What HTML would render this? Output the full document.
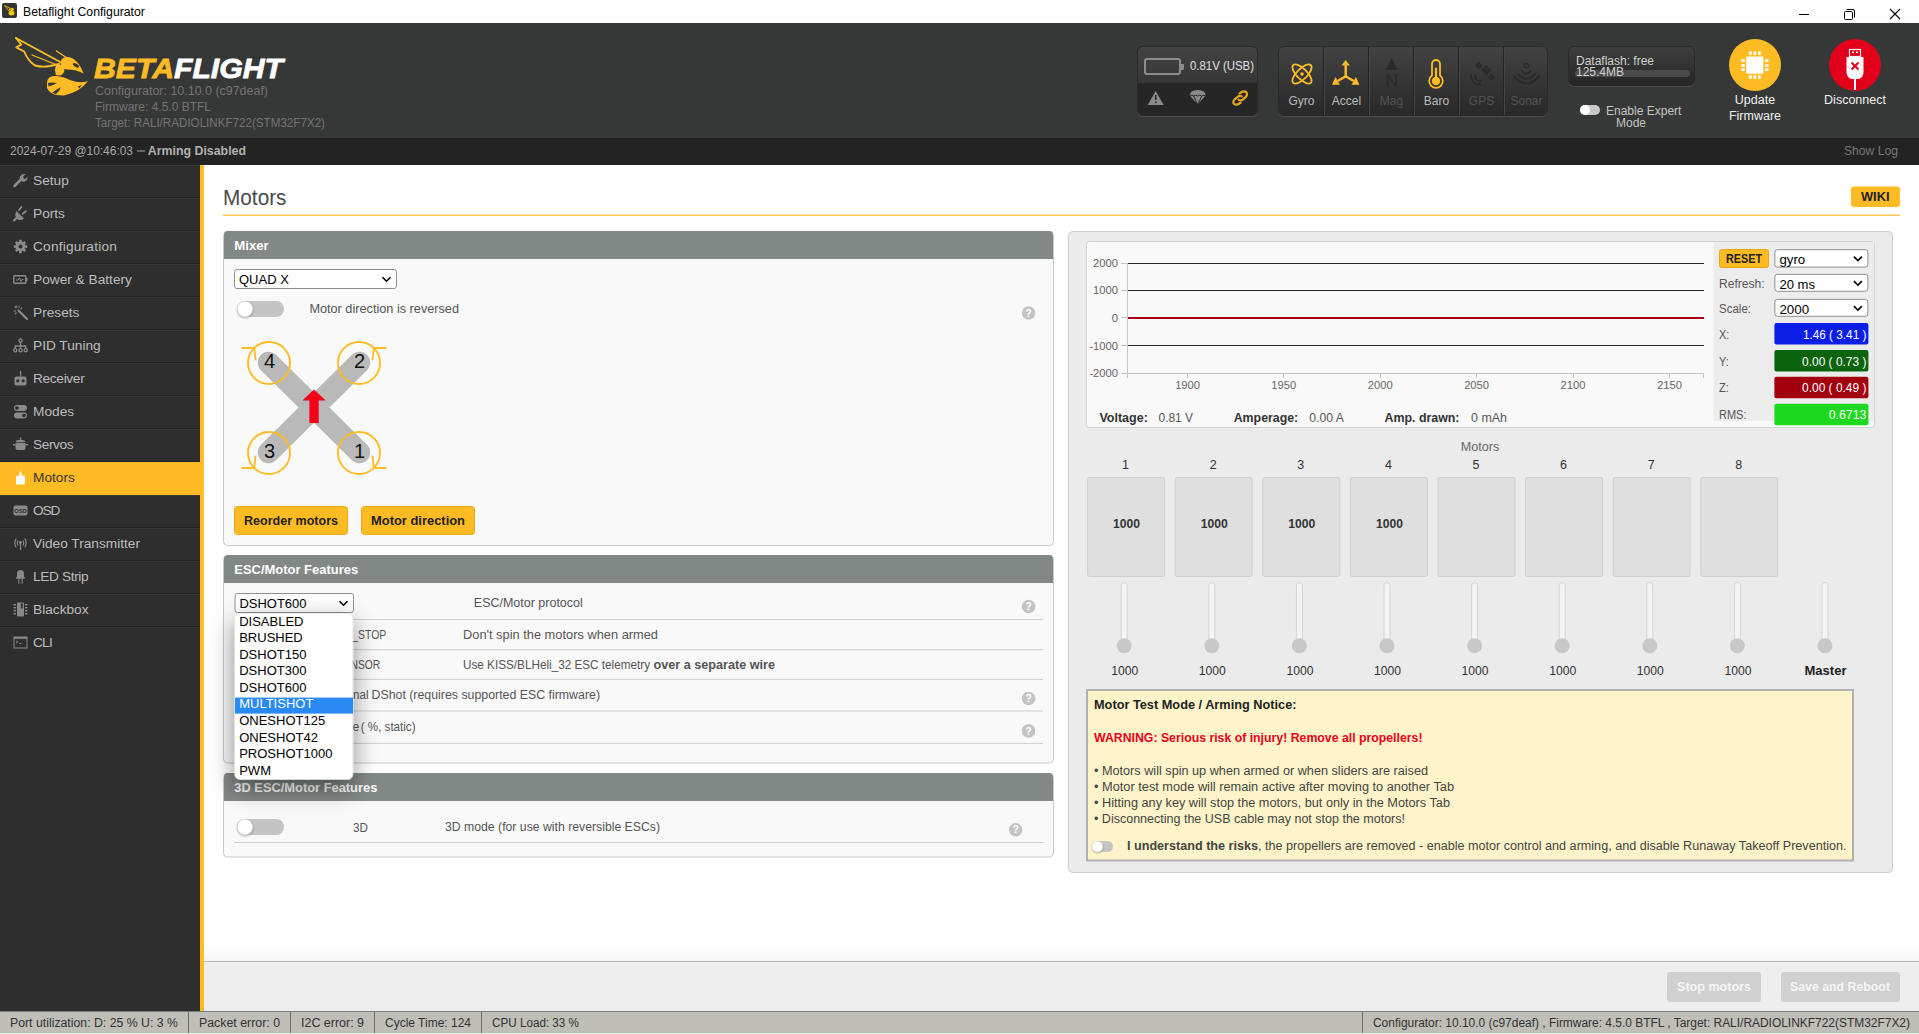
<!DOCTYPE html>
<html><head><meta charset="utf-8">
<style>
*{box-sizing:border-box;margin:0;padding:0}
html,body{width:1919px;height:1034px;overflow:hidden;background:#fff;font-family:"Liberation Sans",sans-serif;position:relative}
.abs{position:absolute}
svg{position:absolute;overflow:visible}
.t{position:absolute;white-space:nowrap;line-height:1}
#titlebar{left:0;top:0;width:1919px;height:23px;background:#fff}
#header{left:0;top:23px;width:1919px;height:115px;background:#363837}
#status{left:0;top:138px;width:1919px;height:27px;background:#232323}
#sidebar{left:0;top:165px;width:200px;height:846px;background:#2e2e2e}
#ybar{left:200px;top:165px;width:4px;height:846px;background:#ffbb24}
#content{left:204px;top:165px;width:1715px;height:796px;background:#fff}
#toolbar{left:204px;top:961px;width:1715px;height:50px;background:#eeeeee;border-top:1px solid #b9b9b9}
#footer{left:0;top:1011px;width:1919px;height:23px;background:#bfbeb7;border-top:1px solid #7d7d7d}
.nav{position:absolute;left:0;width:200px;height:33px;border-top:1px solid #383838;border-bottom:1px solid #232323}
.nav .lbl{position:absolute;left:33px;top:6.5px;font-size:13.7px;color:#bdbdbd;white-space:nowrap;line-height:16px}
.nav svg{left:13px;top:7px}
.nav.on{background:#ffbb24;border-color:#ffbb24}
.nav.on .lbl{color:#333}
.hbox{position:absolute;border-radius:6px;border:1px solid #2a2a2a;box-shadow:0 1px 0 #4a4a4a}
.scell{position:absolute;top:0;width:45px;height:69px;border-left:1px solid #242424;box-shadow:inset 1px 0 0 #454545}
.scell .lbl{position:absolute;left:0;width:45px;top:47px;text-align:center;font-size:12px;line-height:14px}
.fitem{position:absolute;top:0;height:22px;font-size:12px;line-height:22px;color:#333;padding:0 10px;border-left:1px solid #8a8a85}
</style></head>
<body>
<!-- TITLE BAR -->
<div id="titlebar" class="abs">
  <div class="abs" style="left:2px;top:3px;width:15px;height:15px;background:#333;border-radius:2px"></div>
  <svg width="15" height="15" style="left:2px;top:3px"><path d="M2.5 2.5 L8 5 L7 8 Z" fill="none" stroke="#d4b000" stroke-width="1"/><ellipse cx="9.5" cy="10" rx="3" ry="2.5" fill="#f0c800"/><circle cx="10" cy="6.5" r="1.8" fill="#f0c800"/></svg>
  <div class="t" style="left:23px;top:6px;font-size:12.25px;color:#000">Betaflight Configurator</div>
  <div class="abs" style="left:1799px;top:14px;width:10px;height:1px;background:#000"></div>
  <svg width="14" height="14" style="left:1843px;top:8px"><rect x="1.5" y="3.5" width="8" height="8" rx="1.2" fill="none" stroke="#000" stroke-width="1"/><path d="M3.5 1.5 H10 Q11.5 1.5 11.5 3 V9.5" fill="none" stroke="#000" stroke-width="1"/></svg>
  <svg width="14" height="14" style="left:1889px;top:8px"><path d="M1 1 L11 11 M11 1 L1 11" stroke="#000" stroke-width="1.1"/></svg>
</div>
<!-- HEADER -->
<div id="header" class="abs">
  <svg width="300" height="115" style="left:0;top:0" viewBox="0 23 300 115">
    <g fill="#ffbb24">
      <path d="M47,83 Q47,76 55,76 Q62,76 70,80 Q80,84 88,81 Q80,92 64,95.5 Q50,96 47,88 Z"/>
      <circle cx="58.8" cy="70" r="5.6"/>
      <path d="M60.5,62 Q62,56.5 68,57 Q78,58.5 83.5,73.5 Q76,69.5 68,69.5 Q60.5,70 60.5,62 Z"/>
    </g>
    <g fill="#363837">
      <ellipse cx="76" cy="65.3" rx="3.4" ry="1.6" transform="rotate(32 76 65.3)"/>
      <path d="M48,83 Q52,82 57,83 Q52,86 48.5,86.5 Z"/>
      <path d="M52,93 Q57,89 61,87 Q59,92 56,94 Z"/>
      <path d="M78,86.5 L82,85 L79,88.5 Z"/>
      <path d="M53,66 Q51,70 54,75 L56,74 Q54,70 56,66 Z"/>
    </g>
    <g fill="none" stroke="#ffbb24" stroke-linecap="round" stroke-linejoin="round">
      <path d="M16,38 L62,63" stroke-width="1.9"/>
      <path d="M16,38 L21.3,44.6 L16.3,47.3 L24.2,51.5 Q28,61 35,65.5 Q42,67.5 50,66 L59,64" stroke-width="1.9"/>
      <path d="M32,55 L57,65" stroke-width="1.2"/>
      <path d="M56.5,51 L67,58" stroke-width="1.4"/>
    </g>
    <text x="94" y="78.3" font-family="Liberation Sans" font-weight="bold" font-style="italic" font-size="28" textLength="189" lengthAdjust="spacingAndGlyphs"><tspan fill="#ffbb24" stroke="#ffbb24" stroke-width="0.8">BETA</tspan><tspan fill="#ffffff" stroke="#ffffff" stroke-width="0.8">FLIGHT</tspan></text>
    <g font-family="Liberation Sans" font-size="12" fill="#737373">
      <text x="95" y="95" textLength="173" lengthAdjust="spacingAndGlyphs">Configurator: 10.10.0 (c97deaf)</text>
      <text x="95" y="110.8" textLength="116" lengthAdjust="spacingAndGlyphs">Firmware: 4.5.0 BTFL</text>
      <text x="95" y="126.5" textLength="230" lengthAdjust="spacingAndGlyphs">Target: RALI/RADIOLINKF722(STM32F7X2)</text>
    </g>
  </svg>
  <!-- battery box -->
  <div class="hbox" style="left:1137px;top:23px;width:121px;height:70px;overflow:hidden;background:#262626">
    <div class="abs" style="left:0;top:0;width:121px;height:36px;background:linear-gradient(#434343,#363636)"></div>
    <div class="abs" style="left:6px;top:11px;width:37px;height:17px;border:2px solid #8c8c8c;border-radius:3px"></div>
    <div class="abs" style="left:43px;top:17px;width:3px;height:6px;background:#8c8c8c;border-radius:0 1px 1px 0"></div>
    <svg width="121" height="70" style="left:0;top:0" viewBox="1137 46 121 70">
      <text x="1189" y="69.3" font-family="Liberation Sans" font-size="12.5" fill="#e0e0e0" textLength="64" lengthAdjust="spacingAndGlyphs">0.81V (USB)</text>
      <g transform="translate(-0.3,-1)"><path d="M1155,91 L1163,105 L1147,105 Z" fill="#8a8a8a"/>
      <rect x="1154.3" y="95" width="1.5" height="5" fill="#262626"/><rect x="1154.3" y="101.5" width="1.5" height="1.6" fill="#262626"/>
      <path d="M1189,96 Q1189,90 1197,90 Q1205,90 1205,96 L1197,105 Z" fill="#8a8a8a"/>
      <path d="M1189,96 L1197,105 L1205,96 M1193,96 L1197,105 L1201,96 M1189,96 Q1191,94.5 1193,96 Q1195,94.5 1197,96 Q1199,94.5 1201,96 Q1203,94.5 1205,96" fill="none" stroke="#262626" stroke-width="1"/>
      </g><g fill="none" stroke="#e6a823" stroke-width="2.2" stroke-linecap="round" transform="translate(-1,-1)"><path d="M1239.5,93.5 Q1243,90.3 1245.8,91.8 Q1248.3,94.2 1245.6,97.2 L1242.8,99.6 Q1240.6,101.2 1238.6,99.6"/><path d="M1241.8,96.4 Q1239.6,95.2 1237.4,97 L1234.5,99.6 Q1232,102.5 1234.4,104.2 Q1237.5,105.3 1240.6,102.6"/></g>
    </svg>
  </div>
  <!-- sensors box -->
  <div class="hbox" style="left:1278px;top:23px;width:270px;height:70px;overflow:hidden;background:linear-gradient(#424242,#292929)">
    <div class="scell" style="left:0;border-left:none;box-shadow:none"><div class="lbl" style="color:#bababa">Gyro</div></div>
    <div class="scell" style="left:44px"><div class="lbl" style="color:#bababa">Accel</div></div>
    <div class="scell" style="left:89px"><div class="lbl" style="color:#525252">Mag</div></div>
    <div class="scell" style="left:134px"><div class="lbl" style="color:#bababa">Baro</div></div>
    <div class="scell" style="left:179px"><div class="lbl" style="color:#525252">GPS</div></div>
    <div class="scell" style="left:224px"><div class="lbl" style="color:#525252">Sonar</div></div>
    <svg width="270" height="70" style="left:0;top:0" viewBox="1278 46 270 70">
      <g fill="none" stroke="#ffbb24" stroke-width="1.8">
        <ellipse cx="1301" cy="73" rx="12.5" ry="5.2" transform="rotate(45 1301 73)"/>
        <ellipse cx="1301" cy="73" rx="12.5" ry="5.2" transform="rotate(-45 1301 73)"/>
      </g>
      <circle cx="1301" cy="73" r="1.8" fill="#ffbb24"/>
      <g fill="#ffbb24">
        <rect x="1343.5" y="63" width="2.4" height="12"/>
        <path d="M1344.7,59 L1348.8,64.5 L1340.6,64.5 Z"/>
        <path d="M1344.7,74 L1336,79 L1337.3,81 L1345.9,76 Z"/>
        <path d="M1344.7,74 L1353.4,79 L1352.1,81 L1343.5,76 Z"/>
        <path d="M1331,83.8 L1334.5,76 L1338.8,83.8 Z"/>
        <path d="M1358.4,83.8 L1354.9,76 L1350.6,83.8 Z"/>
        <circle cx="1435" cy="80" r="4.2"/><rect x="1433.9" y="66.7" width="2.2" height="13"/>
      </g>
      <path d="M1431,74.5 V63 A4,4 0 0 1 1439,63 V74.5 A6.8,6.8 0 1 1 1431,74.5 Z" fill="none" stroke="#ffbb24" stroke-width="1.8"/>
      <g fill="#2c2c2c">
        <path d="M1390.5,57 L1396.5,69 L1384.5,69 Z"/>
        <path d="M1385.5,86 L1385.5,73 L1387.5,73 L1394,82.5 L1394,73 L1396,73 L1396,86 L1394,86 L1387.5,76.5 L1387.5,86 Z"/>
        <path d="M1477.7,60.5 L1481.7,64.5 L1477.7,68.5 L1473.7,64.5 Z"/>
        <path d="M1485.2,64 L1490.4,69.2 L1485.2,74.4 L1480,69.2 Z"/>
        <path d="M1490.6,72 L1494.6,76 L1490.6,80 L1486.6,76 Z"/>
      </g>
      <g fill="none" stroke="#2a2a2a" stroke-width="1.8">
        <path d="M1470,73.5 Q1469.5,83.5 1481,84"/><path d="M1473.8,73.8 Q1473.5,80.5 1481,80.5"/>
        <path d="M1512.5,75 Q1525.5,90 1538.5,75" stroke-width="2.2"/><path d="M1516.5,72.5 Q1525.5,83.5 1534.5,72.5" stroke-width="2"/><path d="M1520.5,69.5 Q1525.5,76 1530.5,69.5" stroke-width="1.8"/>
      </g>
      <circle cx="1525.5" cy="64.7" r="2.1" fill="none" stroke="#2a2a2a" stroke-width="1.5"/>
    </svg>
  </div>
  <!-- dataflash -->
  <div class="hbox" style="left:1568px;top:23px;width:127px;height:40px;background:linear-gradient(#3e3e3e,#262626)">
    <div class="abs" style="left:6px;top:23px;width:115px;height:7px;border-radius:4px;background:#4a4a4a"></div>
    <div class="t" style="left:7px;top:8.5px;font-size:12px;color:#d0d0d0;line-height:11.3px">Dataflash: free<br>125.4MB</div>
  </div>
  <!-- expert toggle -->
  <div class="abs" style="left:1580px;top:82px;width:20px;height:10px;border-radius:5px;background:#c8c8c8"></div>
  <div class="abs" style="left:1580px;top:82px;width:10px;height:10px;border-radius:5px;background:#fff"></div>
  <div class="t" style="left:1606px;top:83px;font-size:12px;color:#c4c4c4;line-height:11.3px">Enable Expert</div><div class="t" style="left:1616px;top:95.3px;font-size:12px;color:#c4c4c4;line-height:11.3px">Mode</div>
  <!-- update firmware -->
  <div class="abs" style="left:1729px;top:15.5px;width:52px;height:52px;border-radius:50%;background:#ffbb24"></div>
  <svg width="52" height="52" style="left:1729px;top:15px" viewBox="1729 38 52 52">
    <g fill="#fff"><rect x="1746.2" y="56.6" width="17.2" height="17.2" rx="1.2"/><rect x="1748.9" y="51.6" width="2.9" height="3.5" rx="0.8"/><rect x="1748.9" y="75.2" width="2.9" height="3.5" rx="0.8"/><rect x="1753.4" y="51.6" width="2.9" height="3.5" rx="0.8"/><rect x="1753.4" y="75.2" width="2.9" height="3.5" rx="0.8"/><rect x="1758.0" y="51.6" width="2.9" height="3.5" rx="0.8"/><rect x="1758.0" y="75.2" width="2.9" height="3.5" rx="0.8"/><rect x="1741.2" y="59.3" width="3.7" height="2.7" rx="0.8"/><rect x="1765" y="59.3" width="3.6" height="2.7" rx="0.8"/><rect x="1741.2" y="64.0" width="3.7" height="2.7" rx="0.8"/><rect x="1765" y="64.0" width="3.6" height="2.7" rx="0.8"/><rect x="1741.2" y="68.2" width="3.7" height="2.7" rx="0.8"/><rect x="1765" y="68.2" width="3.6" height="2.7" rx="0.8"/></g>
  </svg>
  <div class="t" style="left:1715px;top:68.5px;width:80px;text-align:center;font-size:12.5px;line-height:16px;color:#f0f0f0">Update<br>Firmware</div>
  <!-- disconnect -->
  <div class="abs" style="left:1829px;top:15.5px;width:52px;height:52px;border-radius:50%;background:#e2001a"></div>
  <svg width="52" height="52" style="left:1829px;top:15px" viewBox="1829 38 52 52">
    <rect x="1849.5" y="49.5" width="11" height="7" fill="none" stroke="#fff" stroke-width="1.2"/>
    <rect x="1852" y="51.5" width="2" height="1.5" fill="#fff"/><rect x="1856" y="51.5" width="2" height="1.5" fill="#fff"/>
    <path d="M1846.5,57 L1863.5,57 L1863.5,72 Q1863.5,77 1859,79 L1851,79 Q1846.5,77 1846.5,72 Z" fill="#fff"/>
    <rect x="1854" y="78" width="2" height="12" fill="#fff"/>
    <path d="M1851.5,62.5 L1858.5,69.5 M1858.5,62.5 L1851.5,69.5" stroke="#e2001a" stroke-width="2"/>
  </svg>
  <div class="t" style="left:1815px;top:69px;width:80px;text-align:center;font-size:12.5px;line-height:16px;color:#f0f0f0">Disconnect</div>
</div>
<!-- STATUS -->
<div id="status" class="abs">
  <svg width="1919" height="27" style="left:0;top:0" viewBox="0 138 1919 27">
    <g font-family="Liberation Sans" font-size="12.2">
      <text x="10" y="154.6" fill="#a8a8a8" textLength="123" lengthAdjust="spacingAndGlyphs">2024-07-29 @10:46:03</text>
      <rect x="137" y="150.5" width="8" height="1" fill="#a8a8a8"/>
      <text x="147.8" y="154.6" fill="#b0b0b0" font-weight="bold" textLength="98.2" lengthAdjust="spacingAndGlyphs">Arming Disabled</text>
      <text x="1844" y="154.6" fill="#777" textLength="54" lengthAdjust="spacingAndGlyphs">Show Log</text>
    </g>
  </svg>
</div>
<!-- SIDEBAR -->
<div id="sidebar" class="abs">
  <div class="nav" style="top:0px"><svg width="15" height="15"><path d="M1.5,13 L8,6.5" stroke="#8a8a8a" stroke-width="2.6" stroke-linecap="round"/><path d="M7,7 Q6,3 9,1.5 Q11,0.8 12.5,1.3 L10,3.8 L10.8,5.5 L12.5,6 L14.5,3.8 Q14.8,6 13.5,7.5 Q11,9.5 8,8" fill="#8a8a8a"/></svg><div class="lbl">Setup</div></div>
  <div class="nav" style="top:33px"><svg width="15" height="15"><path d="M3.5,5 L11,12.5 Q8,15 5,13.5 Q2.5,12 2.3,9 Q2.3,7 3.5,5 Z" fill="#8a8a8a"/><path d="M3.5,12 L1,14.5" stroke="#8a8a8a" stroke-width="2.2" stroke-linecap="round"/><path d="M6,4 L8.5,1 M9.8,7.8 L12.8,5.2" stroke="#8a8a8a" stroke-width="1.8" stroke-linecap="round"/></svg><div class="lbl">Ports</div></div>
  <div class="nav" style="top:66px"><svg width="15" height="15"><circle cx="7.5" cy="7.5" r="5" fill="#8a8a8a"/><g stroke="#8a8a8a" stroke-width="2.6"><path d="M7.5,0.8 V14.2 M0.8,7.5 H14.2 M2.8,2.8 L12.2,12.2 M12.2,2.8 L2.8,12.2"/></g><circle cx="7.5" cy="7.5" r="2" fill="#2e2e2e"/></svg><div class="lbl" style="letter-spacing:0.20px">Configuration</div></div>
  <div class="nav" style="top:99px"><svg width="15" height="15"><rect x="0.8" y="3.8" width="12" height="7.5" rx="0.8" fill="none" stroke="#8a8a8a" stroke-width="1.4"/><rect x="13" y="6" width="1.5" height="3" fill="#8a8a8a"/><path d="M3,8 L5,8 L6.5,5.8 L8,9.5 L9,7.5 L10.5,7.5" fill="none" stroke="#8a8a8a" stroke-width="1"/></svg><div class="lbl">Power &amp; Battery</div></div>
  <div class="nav" style="top:132px"><svg width="15" height="15"><path d="M5.5,5.5 L14,14" stroke="#8a8a8a" stroke-width="2.2" stroke-linecap="round"/><g stroke="#8a8a8a" stroke-width="1.1"><path d="M3,0.5 V3.5 M1.5,2 H4.5 M0.5,6 H3 M6,0.5 V2.5 M2,9 L3.5,7.5 M7.5,4 L9,2.5"/></g></svg><div class="lbl">Presets</div></div>
  <div class="nav" style="top:165px"><svg width="15" height="15"><g fill="none" stroke="#8a8a8a" stroke-width="1.3"><circle cx="7.5" cy="2.5" r="1.6"/><circle cx="2.3" cy="12.3" r="1.6"/><circle cx="7.5" cy="12.3" r="1.6"/><circle cx="12.7" cy="12.3" r="1.6"/><path d="M7.5,4 V10.7 M2.3,10.7 V8 H12.7 V10.7"/></g></svg><div class="lbl">PID Tuning</div></div>
  <div class="nav" style="top:198px"><svg width="15" height="15"><rect x="1.5" y="5.5" width="12" height="9" rx="2" fill="#8a8a8a"/><rect x="7" y="0" width="1.2" height="5.5" fill="#8a8a8a"/><circle cx="4.8" cy="9.8" r="1.6" fill="#2e2e2e"/><circle cx="10.2" cy="9.8" r="1.6" fill="#2e2e2e"/></svg><div class="lbl" style="letter-spacing:-0.33px">Receiver</div></div>
  <div class="nav" style="top:231px"><svg width="15" height="15"><rect x="1" y="1" width="13" height="6" rx="3" fill="#8a8a8a"/><rect x="1" y="8.5" width="13" height="6" rx="3" fill="#8a8a8a"/><circle cx="4" cy="4" r="1.8" fill="#2e2e2e"/><circle cx="11" cy="11.5" r="1.8" fill="#2e2e2e"/></svg><div class="lbl">Modes</div></div>
  <div class="nav" style="top:264px"><svg width="15" height="15"><path d="M2.5,6 H12.5 V11 Q12.5,13 10.5,13 H4.5 Q2.5,13 2.5,11 Z" fill="#8a8a8a"/><path d="M3,3.8 Q7.5,1.5 12,3.8 L12,5.2 H3 Z" fill="#8a8a8a"/><rect x="6.8" y="0.5" width="1.4" height="2" fill="#8a8a8a"/><rect x="0" y="7" width="2.5" height="1.5" fill="#8a8a8a"/><rect x="12.5" y="7" width="2.5" height="1.5" fill="#8a8a8a"/></svg><div class="lbl" style="letter-spacing:-0.42px">Servos</div></div>
  <div class="nav on" style="top:297px"><svg width="15" height="15"><path d="M3,7 Q3,5.5 4.5,5.5 H10.5 Q12,5.5 12,7 V13.5 Q12,14.5 11,14.5 H4 Q3,14.5 3,13.5 Z" fill="#fff"/><path d="M7.5,0 L9.2,5 H5.8 Z" fill="#fff"/></svg><div class="lbl">Motors</div></div>
  <div class="nav" style="top:330px"><svg width="15" height="15"><rect x="0.5" y="2.5" width="14" height="10" rx="2" fill="#8a8a8a"/><text x="7.5" y="10" font-size="5.8" font-family="Liberation Sans" font-weight="bold" text-anchor="middle" fill="#2e2e2e">OSD</text></svg><div class="lbl" style="letter-spacing:-1.20px">OSD</div></div>
  <div class="nav" style="top:363px"><svg width="15" height="15"><g fill="none" stroke="#8a8a8a" stroke-width="1.2"><path d="M3.2,2.5 Q0.5,7 3.2,11.5 M11.8,2.5 Q14.5,7 11.8,11.5 M5,4.5 Q3.5,7 5,9.5 M10,4.5 Q11.5,7 10,9.5"/></g><circle cx="7.5" cy="6.5" r="1.4" fill="#8a8a8a"/><rect x="6.9" y="7" width="1.2" height="7" fill="#8a8a8a"/></svg><div class="lbl">Video Transmitter</div></div>
  <div class="nav" style="top:396px"><svg width="15" height="15"><path d="M4,8 V4.5 Q4,1 7.5,1 Q11,1 11,4.5 V8 Z" fill="#8a8a8a"/><rect x="3.2" y="8" width="8.6" height="1.8" fill="#8a8a8a"/><rect x="5.3" y="9.8" width="1.1" height="5" fill="#8a8a8a"/><rect x="8.6" y="9.8" width="1.1" height="5" fill="#8a8a8a"/></svg><div class="lbl" style="letter-spacing:-0.37px">LED Strip</div></div>
  <div class="nav" style="top:429px"><svg width="15" height="15"><rect x="4" y="0.5" width="7" height="14" rx="1" fill="#8a8a8a"/><g fill="#8a8a8a"><rect x="0.5" y="2" width="2.5" height="1.4"/><rect x="0.5" y="5" width="2.5" height="1.4"/><rect x="0.5" y="8" width="2.5" height="1.4"/><rect x="0.5" y="11" width="2.5" height="1.4"/><rect x="12" y="2" width="2.5" height="1.4"/><rect x="12" y="5" width="2.5" height="1.4"/><rect x="12" y="8" width="2.5" height="1.4"/><rect x="12" y="11" width="2.5" height="1.4"/></g><rect x="7.8" y="1.5" width="2" height="5" fill="#2e2e2e"/></svg><div class="lbl">Blackbox</div></div>
  <div class="nav" style="top:462px;border-bottom:none"><svg width="15" height="15"><rect x="1" y="2" width="13" height="11" fill="none" stroke="#8a8a8a" stroke-width="1"/><rect x="1" y="2" width="13" height="1.8" fill="#8a8a8a"/><path d="M3,6 L5,7 L3,8 M6,8.5 H8.5" fill="none" stroke="#8a8a8a" stroke-width="0.8"/></svg><div class="lbl" style="letter-spacing:-0.80px">CLI</div></div>
</div>
<div id="ybar" class="abs"></div>
<svg width="1715" height="796" style="left:204px;top:165px" viewBox="204 165 1715 796" font-family="Liberation Sans">
<defs><filter id="sh" x="-20%" y="-20%" width="140%" height="140%"><feDropShadow dx="0" dy="1" stdDeviation="0.8" flood-opacity="0.35"/></filter><filter id="dd" x="-80%" y="-40%" width="260%" height="190%"><feDropShadow dx="0" dy="8" stdDeviation="12" flood-opacity="0.45"/></filter></defs>
<text x="223.0" y="204.7" font-size="21.50" fill="#4a4a4a" textLength="63.5" lengthAdjust="spacingAndGlyphs">Motors</text>
<rect x="223" y="214.6" width="1677" height="1.2" fill="#ffbb24"/>
<rect x="1851" y="186.5" width="49" height="20.5" rx="3" fill="#ffbb24"/>
<text x="1861.0" y="201.3" font-size="12.00" fill="#222" font-weight="bold" textLength="28.5" lengthAdjust="spacingAndGlyphs">WIKI</text>
<rect x="223.5" y="231.5" width="830" height="314.0" rx="4" fill="#f9f9f9" stroke="#c8c8c8"/>
<path d="M224,235.0 Q224,231.0 228,231.0 H1049 Q1053,231.0 1053,235.0 V259.0 H224 Z" fill="#828885"/>
<text x="234.3" y="250.0" font-size="13.00" fill="#ffffff" font-weight="bold" textLength="34.4" lengthAdjust="spacingAndGlyphs">Mixer</text>
<rect x="223.5" y="555.5" width="830" height="207.5" rx="4" fill="#f9f9f9" stroke="#c8c8c8"/>
<path d="M224,559.0 Q224,555.0 228,555.0 H1049 Q1053,555.0 1053,559.0 V583.0 H224 Z" fill="#828885"/>
<text x="234.3" y="574.0" font-size="13.00" fill="#ffffff" font-weight="bold" textLength="123.8" lengthAdjust="spacingAndGlyphs">ESC/Motor Features</text>
<rect x="223.5" y="773.5" width="830" height="83.5" rx="4" fill="#f9f9f9" stroke="#c8c8c8"/>
<path d="M224,777.0 Q224,773.0 228,773.0 H1049 Q1053,773.0 1053,777.0 V801.0 H224 Z" fill="#828885"/>
<text x="234.3" y="792.0" font-size="13.00" fill="#ffffff" font-weight="bold" textLength="143.0" lengthAdjust="spacingAndGlyphs">3D ESC/Motor Features</text>
<rect x="234.5" y="269.5" width="162.0" height="19.0" rx="2.5" fill="#fff" stroke="#8f8f8f"/>
<text x="239.0" y="283.6" font-size="13.00" fill="#000" textLength="49.8" lengthAdjust="spacingAndGlyphs">QUAD X</text>
<path d="M382.5,277.2 L386.5,281.2 L390.5,277.2" fill="none" stroke="#000" stroke-width="1.6"/>
<rect x="237.0" y="301.0" width="47.0" height="16.0" rx="8.0" fill="#c4c4c4"/>
<circle cx="245.0" cy="309.0" r="7.7" fill="#fff" stroke="#d0d0d0" stroke-width="0.5" filter="url(#sh)"/>
<text x="309.4" y="312.8" font-size="12.50" fill="#555" textLength="149.6" lengthAdjust="spacingAndGlyphs">Motor direction is reversed</text>
<circle cx="1028.6" cy="313.0" r="6.8" fill="#c4c4c4"/>
<text x="1028.6" y="316.6" font-size="10" font-weight="bold" fill="#fff" text-anchor="middle">?</text>
<g stroke="#b9b9b9" stroke-width="21.5" stroke-linecap="round"><path d="M268.5,362.5 L359.5,452.5 M359.5,362.5 L268.5,452.5"/></g>
<circle cx="269.0" cy="363.0" r="21" fill="none" stroke="#ffbb24" stroke-width="1.9"/>
<path d="M241.5,348.0 H254.2 L255.6,360.3" fill="none" stroke="#ffbb24" stroke-width="1.8"/>
<circle cx="359.0" cy="363.0" r="21" fill="none" stroke="#ffbb24" stroke-width="1.9"/>
<path d="M386.5,348.0 H373.8 L372.4,360.3" fill="none" stroke="#ffbb24" stroke-width="1.8"/>
<circle cx="269.0" cy="453.0" r="21" fill="none" stroke="#ffbb24" stroke-width="1.9"/>
<path d="M241.5,468.0 H254.2 L255.6,455.7" fill="none" stroke="#ffbb24" stroke-width="1.8"/>
<circle cx="359.0" cy="453.0" r="21" fill="none" stroke="#ffbb24" stroke-width="1.9"/>
<path d="M386.5,468.0 H373.8 L372.4,455.7" fill="none" stroke="#ffbb24" stroke-width="1.8"/>
<text x="269.5" y="367.8" font-size="20" fill="#111" text-anchor="middle">4</text>
<text x="359.5" y="367.8" font-size="20" fill="#111" text-anchor="middle">2</text>
<text x="269.5" y="457.5" font-size="20" fill="#111" text-anchor="middle">3</text>
<text x="359.5" y="457.5" font-size="20" fill="#111" text-anchor="middle">1</text>
<path d="M314,389.5 L325.7,400.5 L318.7,400.5 L318.7,423 L309.4,423 L309.4,400.5 L302.4,400.5 Z" fill="#f20019"/>
<rect x="234.5" y="506.5" width="113.0" height="28.0" rx="3" fill="#ffbb24" stroke="#e8a912"/>
<text x="291.0" y="524.8" font-size="12.50" fill="#222" font-weight="bold" text-anchor="middle" textLength="94.0" lengthAdjust="spacingAndGlyphs">Reorder motors</text>
<rect x="361.5" y="506.5" width="113.0" height="28.0" rx="3" fill="#ffbb24" stroke="#e8a912"/>
<text x="418.0" y="524.8" font-size="12.50" fill="#222" font-weight="bold" text-anchor="middle" textLength="94.0" lengthAdjust="spacingAndGlyphs">Motor direction</text>
<rect x="235.0" y="593.5" width="118.5" height="19.0" rx="2.5" fill="#fff" stroke="#8f8f8f"/>
<text x="239.5" y="607.6" font-size="13.00" fill="#000" textLength="67.0" lengthAdjust="spacingAndGlyphs">DSHOT600</text>
<path d="M339.5,601.2 L343.5,605.2 L347.5,601.2" fill="none" stroke="#000" stroke-width="1.6"/>
<text x="473.8" y="607.0" font-size="12.50" fill="#555" textLength="109.0" lengthAdjust="spacingAndGlyphs">ESC/Motor protocol</text>
<circle cx="1028.6" cy="606.5" r="6.8" fill="#c4c4c4"/>
<text x="1028.6" y="610.1" font-size="10" font-weight="bold" fill="#fff" text-anchor="middle">?</text>
<rect x="234" y="619.1" width="809" height="1" fill="#cfcfcf"/>
<rect x="234" y="649.2" width="809" height="1" fill="#cfcfcf"/>
<rect x="234" y="678.9" width="809" height="1" fill="#cfcfcf"/>
<rect x="234" y="710.5" width="809" height="1" fill="#cfcfcf"/>
<rect x="234" y="742.9" width="809" height="1" fill="#cfcfcf"/>
<rect x="237.0" y="627.0" width="47.0" height="16.0" rx="8.0" fill="#c4c4c4"/>
<circle cx="245.0" cy="635.0" r="7.7" fill="#fff" stroke="#d0d0d0" stroke-width="0.5" filter="url(#sh)"/>
<text x="358.0" y="639.0" font-size="12.50" fill="#555" text-anchor="end">MOTOR_</text>
<text x="358.0" y="639.0" font-size="12.50" fill="#555" textLength="28.2" lengthAdjust="spacingAndGlyphs">STOP</text>
<text x="463.0" y="639.0" font-size="12.50" fill="#555" textLength="195.0" lengthAdjust="spacingAndGlyphs">Don't spin the motors when armed</text>
<rect x="237.0" y="657.0" width="47.0" height="16.0" rx="8.0" fill="#c4c4c4"/>
<circle cx="245.0" cy="665.0" r="7.7" fill="#fff" stroke="#d0d0d0" stroke-width="0.5" filter="url(#sh)"/>
<text x="350.5" y="669.0" font-size="12.50" fill="#555" text-anchor="end">ESC_SE</text>
<text x="350.5" y="669.0" font-size="12.50" fill="#555" textLength="29.8" lengthAdjust="spacingAndGlyphs">NSOR</text>
<text x="463" y="669" font-size="12.5" fill="#555"><tspan textLength="187" lengthAdjust="spacingAndGlyphs">Use KISS/BLHeli_32 ESC telemetry</tspan><tspan x="653.5" font-weight="bold" textLength="121.5" lengthAdjust="spacingAndGlyphs">over a separate wire</tspan></text>
<rect x="237.0" y="687.0" width="47.0" height="16.0" rx="8.0" fill="#c4c4c4"/>
<circle cx="245.0" cy="695.0" r="7.7" fill="#fff" stroke="#d0d0d0" stroke-width="0.5" filter="url(#sh)"/>
<text x="353.0" y="699.0" font-size="12.50" fill="#555" text-anchor="end">Bidirectio</text>
<text x="353.0" y="699.0" font-size="12.50" fill="#555" textLength="15.5" lengthAdjust="spacingAndGlyphs">nal</text>
<text x="371.5" y="699.0" font-size="12.50" fill="#555" textLength="228.5" lengthAdjust="spacingAndGlyphs">DShot (requires supported ESC firmware)</text>
<rect x="237" y="717" width="50" height="20" fill="#fff" stroke="#ccc"/>
<text x="352.5" y="730.5" font-size="12.50" fill="#555" text-anchor="end">Motor Idl</text>
<text x="352.5" y="730.5" font-size="12.50" fill="#555" textLength="6.8" lengthAdjust="spacingAndGlyphs">e</text>
<text x="360.8" y="730.5" font-size="12.50" fill="#555" textLength="54.7" lengthAdjust="spacingAndGlyphs">( %, static)</text>
<circle cx="1028.6" cy="698.5" r="6.8" fill="#c4c4c4"/>
<text x="1028.6" y="702.1" font-size="10" font-weight="bold" fill="#fff" text-anchor="middle">?</text>
<circle cx="1028.6" cy="730.9" r="6.8" fill="#c4c4c4"/>
<text x="1028.6" y="734.5" font-size="10" font-weight="bold" fill="#fff" text-anchor="middle">?</text>
<rect x="237.0" y="819.0" width="47.0" height="16.0" rx="8.0" fill="#c4c4c4"/>
<circle cx="245.0" cy="827.0" r="7.7" fill="#fff" stroke="#d0d0d0" stroke-width="0.5" filter="url(#sh)"/>
<text x="353.0" y="832.0" font-size="12.50" fill="#555" textLength="15.0" lengthAdjust="spacingAndGlyphs">3D</text>
<text x="445.0" y="830.5" font-size="12.50" fill="#555" textLength="215.0" lengthAdjust="spacingAndGlyphs">3D mode (for use with reversible ESCs)</text>
<rect x="234" y="842" width="809" height="1" fill="#cfcfcf"/>
<circle cx="1015.7" cy="829.8" r="6.8" fill="#c4c4c4"/>
<text x="1015.7" y="833.4" font-size="10" font-weight="bold" fill="#fff" text-anchor="middle">?</text>
<rect x="1068.5" y="231.5" width="824" height="641" rx="4" fill="#ebebeb" stroke="#cdcdcd"/>
<rect x="1086.5" y="241.5" width="788" height="186" rx="3" fill="#f9f9f9" stroke="#d2d2d2"/>
<rect x="1713.5" y="242" width="160.5" height="179" fill="#ececec"/>
<rect x="1127" y="263" width="577" height="1" fill="#262626"/>
<rect x="1121" y="263" width="6" height="1" fill="#c4c4c4"/>
<text x="1118.0" y="267.1" font-size="11.20" fill="#666" text-anchor="end">2000</text>
<rect x="1127" y="290" width="577" height="1" fill="#262626"/>
<rect x="1121" y="290" width="6" height="1" fill="#c4c4c4"/>
<text x="1118.0" y="294.0" font-size="11.20" fill="#666" text-anchor="end">1000</text>
<rect x="1127" y="317" width="577" height="2" fill="#a50010"/>
<rect x="1121" y="317" width="6" height="1" fill="#c4c4c4"/>
<text x="1118.0" y="321.7" font-size="11.20" fill="#666" text-anchor="end">0</text>
<rect x="1127" y="345" width="577" height="1" fill="#262626"/>
<rect x="1121" y="345" width="6" height="1" fill="#c4c4c4"/>
<text x="1118.0" y="349.5" font-size="11.20" fill="#666" text-anchor="end">-1000</text>
<rect x="1127" y="373" width="577" height="1" fill="#c4c4c4"/>
<rect x="1121" y="373" width="6" height="1" fill="#c4c4c4"/>
<text x="1118.0" y="377.4" font-size="11.20" fill="#666" text-anchor="end">-2000</text>
<rect x="1127" y="263" width="1" height="115" fill="#c8c8c8"/>
<rect x="1187" y="373" width="1" height="5" fill="#c4c4c4"/>
<text x="1187.6" y="389.2" font-size="11.20" fill="#666" text-anchor="middle">1900</text>
<rect x="1283" y="373" width="1" height="5" fill="#c4c4c4"/>
<text x="1283.8" y="389.2" font-size="11.20" fill="#666" text-anchor="middle">1950</text>
<rect x="1380" y="373" width="1" height="5" fill="#c4c4c4"/>
<text x="1380.2" y="389.2" font-size="11.20" fill="#666" text-anchor="middle">2000</text>
<rect x="1476" y="373" width="1" height="5" fill="#c4c4c4"/>
<text x="1476.6" y="389.2" font-size="11.20" fill="#666" text-anchor="middle">2050</text>
<rect x="1573" y="373" width="1" height="5" fill="#c4c4c4"/>
<text x="1573.0" y="389.2" font-size="11.20" fill="#666" text-anchor="middle">2100</text>
<rect x="1669" y="373" width="1" height="5" fill="#c4c4c4"/>
<text x="1669.6" y="389.2" font-size="11.20" fill="#666" text-anchor="middle">2150</text>
<rect x="1703" y="373" width="1" height="5" fill="#c4c4c4"/>
<text x="1099.4" y="421.6" font-size="12.50" fill="#333" font-weight="bold" textLength="48.5" lengthAdjust="spacingAndGlyphs">Voltage:</text>
<text x="1158.5" y="421.6" font-size="12.50" fill="#555" textLength="34.5" lengthAdjust="spacingAndGlyphs">0.81 V</text>
<text x="1233.7" y="421.6" font-size="12.50" fill="#333" font-weight="bold" textLength="64.5" lengthAdjust="spacingAndGlyphs">Amperage:</text>
<text x="1309.3" y="421.6" font-size="12.50" fill="#555" textLength="34.5" lengthAdjust="spacingAndGlyphs">0.00 A</text>
<text x="1384.5" y="421.6" font-size="12.50" fill="#333" font-weight="bold" textLength="75.0" lengthAdjust="spacingAndGlyphs">Amp. drawn:</text>
<text x="1471.0" y="421.6" font-size="12.50" fill="#555" textLength="36.0" lengthAdjust="spacingAndGlyphs">0 mAh</text>
<rect x="1719.5" y="249.5" width="49" height="18" rx="2" fill="#ffbb24" stroke="#e8a912"/>
<text x="1744.0" y="263.0" font-size="12.00" fill="#222" font-weight="bold" text-anchor="middle" textLength="36.0" lengthAdjust="spacingAndGlyphs">RESET</text>
<rect x="1774.9" y="249.7" width="93.0" height="17.4" rx="2.5" fill="#fff" stroke="#8f8f8f"/>
<text x="1779.4" y="263.8" font-size="13.00" fill="#000" textLength="25.8" lengthAdjust="spacingAndGlyphs">gyro</text>
<path d="M1853.9,256.6 L1857.9,260.6 L1861.9,256.6" fill="none" stroke="#000" stroke-width="1.6"/>
<text x="1719.0" y="287.5" font-size="12.50" fill="#555" textLength="45.5" lengthAdjust="spacingAndGlyphs">Refresh:</text>
<rect x="1774.9" y="274.4" width="93.0" height="16.9" rx="2.5" fill="#fff" stroke="#8f8f8f"/>
<text x="1779.4" y="288.5" font-size="13.00" fill="#000" textLength="35.6" lengthAdjust="spacingAndGlyphs">20 ms</text>
<path d="M1853.9,281.1 L1857.9,285.1 L1861.9,281.1" fill="none" stroke="#000" stroke-width="1.6"/>
<text x="1719.0" y="312.5" font-size="12.50" fill="#555" textLength="32.0" lengthAdjust="spacingAndGlyphs">Scale:</text>
<rect x="1774.9" y="299.4" width="93.0" height="16.9" rx="2.5" fill="#fff" stroke="#8f8f8f"/>
<text x="1779.4" y="313.5" font-size="13.00" fill="#000" textLength="29.7" lengthAdjust="spacingAndGlyphs">2000</text>
<path d="M1853.9,306.1 L1857.9,310.1 L1861.9,306.1" fill="none" stroke="#000" stroke-width="1.6"/>
<text x="1719.0" y="338.5" font-size="12.50" fill="#555" textLength="10.4" lengthAdjust="spacingAndGlyphs">X:</text>
<rect x="1774.4" y="323.0" width="94" height="21.6" rx="2" fill="#0b1ee8"/>
<text x="1866.4" y="338.5" font-size="12.50" fill="#fff" text-anchor="end" textLength="63.5" lengthAdjust="spacingAndGlyphs">1.46 ( 3.41 )</text>
<text x="1719.0" y="365.5" font-size="12.50" fill="#555" textLength="9.8" lengthAdjust="spacingAndGlyphs">Y:</text>
<rect x="1774.4" y="350.0" width="94" height="21.4" rx="2" fill="#0a640c"/>
<text x="1866.4" y="365.5" font-size="12.50" fill="#fff" text-anchor="end" textLength="64.3" lengthAdjust="spacingAndGlyphs">0.00 ( 0.73 )</text>
<text x="1719.0" y="392.3" font-size="12.50" fill="#555" textLength="9.8" lengthAdjust="spacingAndGlyphs">Z:</text>
<rect x="1774.4" y="376.8" width="94" height="21.5" rx="2" fill="#a3000f"/>
<text x="1866.4" y="392.3" font-size="12.50" fill="#fff" text-anchor="end" textLength="64.3" lengthAdjust="spacingAndGlyphs">0.00 ( 0.49 )</text>
<text x="1719.0" y="419.2" font-size="12.50" fill="#555" textLength="27.5" lengthAdjust="spacingAndGlyphs">RMS:</text>
<rect x="1774.4" y="403.7" width="94" height="21.5" rx="2" fill="#1ed81e"/>
<text x="1866.4" y="419.2" font-size="12.50" fill="#fff" text-anchor="end" textLength="37.7" lengthAdjust="spacingAndGlyphs">0.6713</text>
<text x="1480.0" y="451.0" font-size="12.50" fill="#666" text-anchor="middle" textLength="38.5" lengthAdjust="spacingAndGlyphs">Motors</text>
<text x="1125.6" y="468.5" font-size="12.50" fill="#333" text-anchor="middle">1</text>
<rect x="1087.6" y="477.5" width="77" height="99" rx="2" fill="#dfdfdf" stroke="#cfcfcf"/>
<text x="1126.6" y="528.0" font-size="12.50" fill="#333" font-weight="bold" text-anchor="middle" textLength="27.0" lengthAdjust="spacingAndGlyphs">1000</text>
<text x="1213.2" y="468.5" font-size="12.50" fill="#333" text-anchor="middle">2</text>
<rect x="1175.2" y="477.5" width="77" height="99" rx="2" fill="#dfdfdf" stroke="#cfcfcf"/>
<text x="1214.2" y="528.0" font-size="12.50" fill="#333" font-weight="bold" text-anchor="middle" textLength="27.0" lengthAdjust="spacingAndGlyphs">1000</text>
<text x="1300.8" y="468.5" font-size="12.50" fill="#333" text-anchor="middle">3</text>
<rect x="1262.8" y="477.5" width="77" height="99" rx="2" fill="#dfdfdf" stroke="#cfcfcf"/>
<text x="1301.8" y="528.0" font-size="12.50" fill="#333" font-weight="bold" text-anchor="middle" textLength="27.0" lengthAdjust="spacingAndGlyphs">1000</text>
<text x="1388.4" y="468.5" font-size="12.50" fill="#333" text-anchor="middle">4</text>
<rect x="1350.4" y="477.5" width="77" height="99" rx="2" fill="#dfdfdf" stroke="#cfcfcf"/>
<text x="1389.4" y="528.0" font-size="12.50" fill="#333" font-weight="bold" text-anchor="middle" textLength="27.0" lengthAdjust="spacingAndGlyphs">1000</text>
<text x="1476.0" y="468.5" font-size="12.50" fill="#333" text-anchor="middle">5</text>
<rect x="1438.0" y="477.5" width="77" height="99" rx="2" fill="#dfdfdf" stroke="#cfcfcf"/>
<text x="1563.6" y="468.5" font-size="12.50" fill="#333" text-anchor="middle">6</text>
<rect x="1525.6" y="477.5" width="77" height="99" rx="2" fill="#dfdfdf" stroke="#cfcfcf"/>
<text x="1651.2" y="468.5" font-size="12.50" fill="#333" text-anchor="middle">7</text>
<rect x="1613.2" y="477.5" width="77" height="99" rx="2" fill="#dfdfdf" stroke="#cfcfcf"/>
<text x="1738.8" y="468.5" font-size="12.50" fill="#333" text-anchor="middle">8</text>
<rect x="1700.8" y="477.5" width="77" height="99" rx="2" fill="#dfdfdf" stroke="#cfcfcf"/>
<rect x="1121.2" y="582.5" width="6" height="66" rx="3" fill="#f4f4f4" stroke="#d4d4d4"/>
<circle cx="1124.2" cy="645.8" r="7.5" fill="#c8c8c8"/>
<text x="1124.7" y="675.1" font-size="12.50" fill="#333" text-anchor="middle" textLength="27.0" lengthAdjust="spacingAndGlyphs">1000</text>
<rect x="1208.8" y="582.5" width="6" height="66" rx="3" fill="#f4f4f4" stroke="#d4d4d4"/>
<circle cx="1211.8" cy="645.8" r="7.5" fill="#c8c8c8"/>
<text x="1212.3" y="675.1" font-size="12.50" fill="#333" text-anchor="middle" textLength="27.0" lengthAdjust="spacingAndGlyphs">1000</text>
<rect x="1296.4" y="582.5" width="6" height="66" rx="3" fill="#f4f4f4" stroke="#d4d4d4"/>
<circle cx="1299.4" cy="645.8" r="7.5" fill="#c8c8c8"/>
<text x="1299.9" y="675.1" font-size="12.50" fill="#333" text-anchor="middle" textLength="27.0" lengthAdjust="spacingAndGlyphs">1000</text>
<rect x="1384.0" y="582.5" width="6" height="66" rx="3" fill="#f4f4f4" stroke="#d4d4d4"/>
<circle cx="1387.0" cy="645.8" r="7.5" fill="#c8c8c8"/>
<text x="1387.5" y="675.1" font-size="12.50" fill="#333" text-anchor="middle" textLength="27.0" lengthAdjust="spacingAndGlyphs">1000</text>
<rect x="1471.6" y="582.5" width="6" height="66" rx="3" fill="#f4f4f4" stroke="#d4d4d4"/>
<circle cx="1474.6" cy="645.8" r="7.5" fill="#c8c8c8"/>
<text x="1475.1" y="675.1" font-size="12.50" fill="#333" text-anchor="middle" textLength="27.0" lengthAdjust="spacingAndGlyphs">1000</text>
<rect x="1559.2" y="582.5" width="6" height="66" rx="3" fill="#f4f4f4" stroke="#d4d4d4"/>
<circle cx="1562.2" cy="645.8" r="7.5" fill="#c8c8c8"/>
<text x="1562.7" y="675.1" font-size="12.50" fill="#333" text-anchor="middle" textLength="27.0" lengthAdjust="spacingAndGlyphs">1000</text>
<rect x="1646.8" y="582.5" width="6" height="66" rx="3" fill="#f4f4f4" stroke="#d4d4d4"/>
<circle cx="1649.8" cy="645.8" r="7.5" fill="#c8c8c8"/>
<text x="1650.3" y="675.1" font-size="12.50" fill="#333" text-anchor="middle" textLength="27.0" lengthAdjust="spacingAndGlyphs">1000</text>
<rect x="1734.4" y="582.5" width="6" height="66" rx="3" fill="#f4f4f4" stroke="#d4d4d4"/>
<circle cx="1737.4" cy="645.8" r="7.5" fill="#c8c8c8"/>
<text x="1737.9" y="675.1" font-size="12.50" fill="#333" text-anchor="middle" textLength="27.0" lengthAdjust="spacingAndGlyphs">1000</text>
<rect x="1822.0" y="582.5" width="6" height="66" rx="3" fill="#f4f4f4" stroke="#d4d4d4"/>
<circle cx="1825.0" cy="645.8" r="7.5" fill="#c8c8c8"/>
<text x="1825.5" y="675.1" font-size="12.50" fill="#222" font-weight="bold" text-anchor="middle" textLength="42.0" lengthAdjust="spacingAndGlyphs">Master</text>
<rect x="1087" y="690" width="766" height="170.5" fill="#fff4c9" stroke="#b0b0b0" stroke-width="2"/>
<text x="1094.0" y="708.6" font-size="12.50" fill="#222" font-weight="bold" textLength="202.5" lengthAdjust="spacingAndGlyphs">Motor Test Mode / Arming Notice:</text>
<text x="1094.0" y="741.8" font-size="12.50" fill="#e8001c" font-weight="bold" textLength="328.5" lengthAdjust="spacingAndGlyphs">WARNING: Serious risk of injury! Remove all propellers!</text>
<text x="1094.0" y="774.9" font-size="12.50" fill="#444" textLength="334.0" lengthAdjust="spacingAndGlyphs">• Motors will spin up when armed or when sliders are raised</text>
<text x="1094.0" y="790.7" font-size="12.50" fill="#444" textLength="360.0" lengthAdjust="spacingAndGlyphs">• Motor test mode will remain active after moving to another Tab</text>
<text x="1094.0" y="806.7" font-size="12.50" fill="#444" textLength="356.0" lengthAdjust="spacingAndGlyphs">• Hitting any key will stop the motors, but only in the Motors Tab</text>
<text x="1094.0" y="822.6" font-size="12.50" fill="#444" textLength="311.0" lengthAdjust="spacingAndGlyphs">• Disconnecting the USB cable may not stop the motors!</text>
<rect x="1092" y="841" width="21" height="11" rx="5.5" fill="#c4c4c4"/><circle cx="1097.5" cy="846.5" r="5.3" fill="#fff" filter="url(#sh)"/>
<text x="1127" y="850.1" font-size="12.5" fill="#444"><tspan font-weight="bold" textLength="131" lengthAdjust="spacingAndGlyphs">I understand the risks</tspan><tspan x="1258" textLength="588.5" lengthAdjust="spacingAndGlyphs">, the propellers are removed - enable motor control and arming, and disable Runaway Takeoff Prevention.</tspan></text>
<rect x="234.8" y="613.5" width="118" height="166" rx="5" fill="#fff" stroke="#e2e2e2" stroke-width="0.6" filter="url(#dd)"/>
<text x="239.2" y="625.6" font-size="13.00" fill="#000">DISABLED</text>
<text x="239.2" y="642.1" font-size="13.00" fill="#000">BRUSHED</text>
<text x="239.2" y="658.7" font-size="13.00" fill="#000">DSHOT150</text>
<text x="239.2" y="675.2" font-size="13.00" fill="#000">DSHOT300</text>
<text x="239.2" y="691.8" font-size="13.00" fill="#000">DSHOT600</text>
<rect x="235" y="697.6" width="118" height="16" fill="#2a8af5"/>
<text x="239.2" y="708.4" font-size="13.00" fill="#fff">MULTISHOT</text>
<text x="239.2" y="724.9" font-size="13.00" fill="#000">ONESHOT125</text>
<text x="239.2" y="741.5" font-size="13.00" fill="#000">ONESHOT42</text>
<text x="239.2" y="758.0" font-size="13.00" fill="#000">PROSHOT1000</text>
<text x="239.2" y="774.6" font-size="13.00" fill="#000">PWM</text>
</svg>
<!-- TOOLBAR -->
<div class="abs" style="left:204px;top:945px;width:1715px;height:16px;background:linear-gradient(rgba(0,0,0,0),rgba(0,0,0,0.04))"></div>
<div id="toolbar" class="abs">
  <div class="abs" style="left:1463px;top:10px;width:94px;height:30px;border-radius:3px;background:#d0d0d0"></div>
  <div class="abs" style="left:1577px;top:10px;width:119px;height:30px;border-radius:3px;background:#d0d0d0"></div>
  <svg width="1715" height="50" style="left:0;top:-1px" viewBox="204 961 1715 50">
    <g font-family="Liberation Sans" font-weight="bold" font-size="12.5" fill="#f6f6f6">
      <text x="1677" y="991" textLength="74" lengthAdjust="spacingAndGlyphs">Stop motors</text>
      <text x="1790" y="991" textLength="100" lengthAdjust="spacingAndGlyphs">Save and Reboot</text>
    </g>
  </svg>
</div>
<!-- FOOTER -->
<div id="footer" class="abs">
  <svg width="1919" height="23" style="left:0;top:-1px" viewBox="0 1011 1919 23">
    <g fill="#6e6e6a"><rect x="188" y="1012" width="1" height="22"/><rect x="290" y="1012" width="1" height="22"/><rect x="374" y="1012" width="1" height="22"/><rect x="481" y="1012" width="1" height="22"/><rect x="1362" y="1012" width="1" height="22"/></g>
    <g font-family="Liberation Sans" font-size="12" fill="#333">
      <text x="10" y="1027" textLength="168" lengthAdjust="spacingAndGlyphs">Port utilization: D: 25 % U: 3 %</text>
      <text x="199" y="1027" textLength="81" lengthAdjust="spacingAndGlyphs">Packet error: 0</text>
      <text x="301" y="1027" textLength="63" lengthAdjust="spacingAndGlyphs">I2C error: 9</text>
      <text x="385" y="1027" textLength="86" lengthAdjust="spacingAndGlyphs">Cycle Time: 124</text>
      <text x="492" y="1027" textLength="87" lengthAdjust="spacingAndGlyphs">CPU Load: 33 %</text>
      <text x="1373" y="1027" textLength="537" lengthAdjust="spacingAndGlyphs">Configurator: 10.10.0 (c97deaf) , Firmware: 4.5.0 BTFL , Target: RALI/RADIOLINKF722(STM32F7X2)</text>
    </g>
  </svg>
</div>
<div class="abs" style="left:0;top:1033px;width:1919px;height:1px;background:#dcefe2"></div>
</body></html>
